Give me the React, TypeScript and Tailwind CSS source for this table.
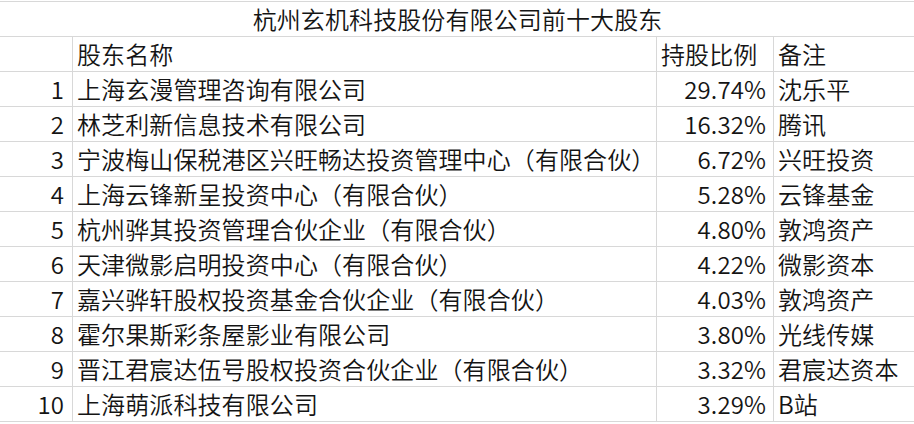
const rows: [string, string, string][] = [
  ["上海玄漫管理咨询有限公司", "29.74%", "沈乐平"],
  ["林芝利新信息技术有限公司", "16.32%", "腾讯"],
  ["宁波梅山保税港区兴旺畅达投资管理中心（有限合伙）", "6.72%", "兴旺投资"],
  ["上海云锋新呈投资中心（有限合伙）", "5.28%", "云锋基金"],
  ["杭州骅其投资管理合伙企业（有限合伙）", "4.80%", "敦鸿资产"],
  ["天津微影启明投资中心（有限合伙）", "4.22%", "微影资本"],
  ["嘉兴骅轩股权投资基金合伙企业（有限合伙）", "4.03%", "敦鸿资产"],
  ["霍尔果斯彩条屋影业有限公司", "3.80%", "光线传媒"],
  ["晋江君宸达伍号股权投资合伙企业（有限合伙）", "3.32%", "君宸达资本"],
  ["上海萌派科技有限公司", "3.29%", "B站"],
];

const cell = "flex h-[35px] items-center border-b border-[#d8d8d8] whitespace-nowrap";

export default function App() {
  return (
    <div className="h-[424px] w-[914px] overflow-hidden bg-white pt-px font-['Noto_Sans_CJK_SC',sans-serif] text-[24px] font-[350] leading-none tracking-[0.1px] text-[#141414]">
      <div className="border-t border-[#d8d8d8]">
        <div className={`${cell} justify-center pl-px`}>杭州玄机科技股份有限公司前十大股东</div>
        <div className="grid grid-cols-[73px_584px_117px_1fr]">
          <div className={`${cell} border-r`} />
          <div className={`${cell} border-r pl-[4px]`}>股东名称</div>
          <div className={`${cell} border-r pl-[4px]`}>持股比例</div>
          <div className={`${cell} pl-[4px]`}>备注</div>
          {rows.map(([name, pct, note], i) => (
            <div key={name} className="contents">
              <div className={`${cell} justify-end border-r pr-[8px]`}>{i + 1}</div>
              <div className={`${cell} border-r pl-[4px]`}>{name}</div>
              <div className={`${cell} justify-end border-r pr-[7px]`}>{pct}</div>
              <div className={`${cell} pl-[4px]`}>{note}</div>
            </div>
          ))}
        </div>
      </div>
    </div>
  );
}
